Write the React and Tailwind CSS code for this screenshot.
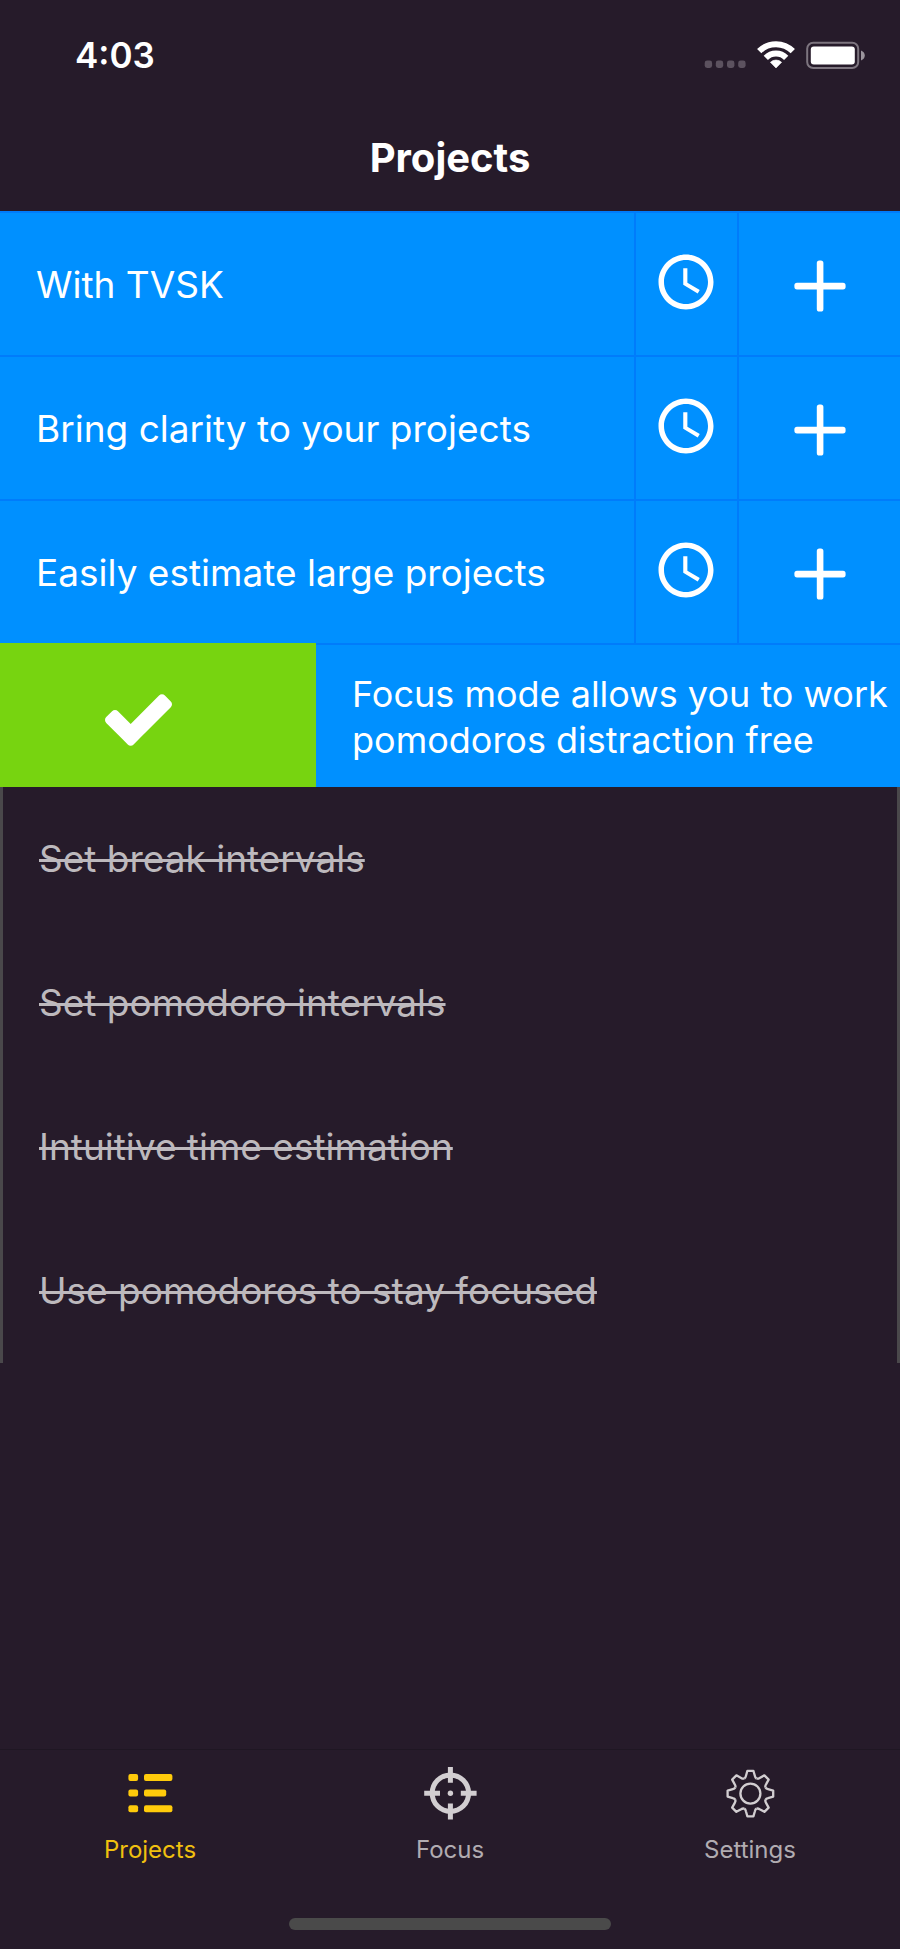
import React from "react";

const openProjects = [
  "With TVSK",
  "Bring clarity to your projects",
  "Easily estimate large projects",
];

const doneProjects = [
  "Set break intervals",
  "Set pomodoro intervals",
  "Intuitive time estimation",
  "Use pomodoros to stay focused",
];

function StatusIcons() {
  return (
    <svg width="162" height="30" viewBox="0 0 162 30" aria-hidden="true">
      <g fill="#5c525f">
        <rect x="0.7" y="20.6" width="7.4" height="7.4" rx="2.4" />
        <rect x="11.8" y="20.6" width="7.4" height="7.4" rx="2.4" />
        <rect x="23" y="20.6" width="7.4" height="7.4" rx="2.4" />
        <rect x="34.2" y="20.6" width="7.4" height="7.4" rx="2.4" />
      </g>
      <g fill="none" stroke="#fff" strokeWidth="6">
        <path d="M55.2 11.2 A23.6 23.6 0 0 1 88.8 11.2" />
        <path d="M61.8 17.8 A14.4 14.4 0 0 1 82.2 17.8" />
      </g>
      <path d="M72 28 L66.4 22.3 A8 8 0 0 1 77.6 22.3 Z" fill="#fff" stroke="#fff" strokeWidth="0.6" strokeLinejoin="round" />
      <rect x="103.2" y="2.8" width="51" height="25.2" rx="6" fill="none" stroke="#7d757f" strokeWidth="2" />
      <rect x="106.8" y="6.4" width="44" height="18" rx="3" fill="#fff" />
      <path d="M157 10.4 Q160.8 12 160.8 15.4 Q160.8 18.8 157 20.4 Z" fill="#9b959d" />
    </svg>
  );
}

function ClockIcon() {
  return (
    <svg width="66" height="66" viewBox="0 0 24 24" fill="#fff" aria-hidden="true">
      <path d="M11.99 2C6.47 2 2 6.48 2 12s4.47 10 9.99 10C17.52 22 22 17.52 22 12S17.52 2 11.99 2zM12 20c-4.42 0-8-3.58-8-8s3.58-8 8-8 8 3.58 8 8-3.58 8-8 8z" />
      <path d="M12.5 7H11v6l5.25 3.15.75-1.23-4.5-2.67z" />
    </svg>
  );
}

function PlusIcon() {
  return (
    <svg width="52" height="52" viewBox="0 0 52 52" fill="#fff" aria-hidden="true">
      <rect x="0.4" y="22.8" width="51.2" height="6.6" rx="2.6" />
      <rect x="22.8" y="0.4" width="6.6" height="51.2" rx="2.6" />
    </svg>
  );
}

function CheckIcon() {
  return (
    <svg width="67" height="52" viewBox="121 334 1550 1188" fill="#fff" aria-hidden="true">
      <path d="M1671 566q0 40-28 68l-724 724-136 136q-28 28-68 28t-68-28l-136-136-362-362q-28-28-28-68t28-68l136-136q28-28 68-28t68 28l294 295 656-657q28-28 68-28t68 28l136 136q28 28 28 68z" />
    </svg>
  );
}

function ListIcon() {
  return (
    <svg width="56" height="56" viewBox="0 0 56 56" fill="#ffcb0b" aria-hidden="true">
      <rect x="6.4" y="9" width="9.7" height="7" rx="2" />
      <rect x="22" y="9" width="28.4" height="7" rx="2" />
      <rect x="6.4" y="24.6" width="9.7" height="7" rx="2" />
      <rect x="22" y="24.6" width="22.2" height="7" rx="2" />
      <rect x="6.4" y="40.2" width="9.7" height="7" rx="2" />
      <rect x="22" y="40.2" width="28.4" height="7" rx="2" />
    </svg>
  );
}

function TargetIcon() {
  return (
    <svg width="56" height="56" viewBox="0 0 56 56" fill="none" stroke="#d2ced1" strokeWidth="5" aria-hidden="true">
      <circle cx="28.4" cy="28.2" r="18.2" />
      <path d="M28.4 2V17.8M28.4 38.6V54.4M2.2 28.2H18M38.8 28.2H54.6" />
      <circle cx="28.4" cy="28.2" r="2.7" fill="#d2ced1" stroke="none" />
    </svg>
  );
}

const toothAngles = [0, 45, 90, 135, 180, 225, 270, 315];

function GearIcon() {
  return (
    <svg width="56" height="56" viewBox="0 0 56 56" fill="none" stroke="#d2ced1" strokeWidth="2.3" strokeLinejoin="round" aria-hidden="true">
      <g transform="translate(28.4 28.6)">
        {toothAngles.map((angle) => (
          <path
            key={angle}
            transform={`rotate(${angle})`}
            d="M-6.2 -15 Q-4.9 -15.8 -4.5 -17.6 L-3 -22.8 H3 L4.5 -17.6 Q4.9 -15.8 6.2 -15"
          />
        ))}
        <circle r="10" />
      </g>
    </svg>
  );
}

const tabs = [
  { name: "Projects", Icon: ListIcon, color: "text-[#f0c00f]", current: true },
  { name: "Focus", Icon: TargetIcon, color: "text-[#b1acb1]", current: false },
  { name: "Settings", Icon: GearIcon, color: "text-[#b1acb1]", current: false },
];

export default function App() {
  return (
    <div className="flex min-h-screen flex-col bg-[#261b2a] font-['Inter',sans-serif] text-[37px] leading-[46px] text-white">
      <header>
        <div className="flex h-[110px] items-center justify-between pr-[34px] pl-[75px]">
          <time className="text-[35px] font-semibold">4:03</time>
          <StatusIcons />
        </div>
        <h1 className="flex h-[101px] justify-center pt-[25px] text-[40px] font-bold">Projects</h1>
      </header>

      <main className="flex-1">
        <ul>
          {openProjects.map((name) => (
            <li key={name} className="flex h-[144px] border-t-2 border-[#007cfb] bg-[#0090ff]">
              <span className="flex flex-1 items-center pt-0.5 pl-[36px]">{name}</span>
              <button
                type="button"
                aria-label={`Time estimate for ${name}`}
                className="flex w-[103px] items-center justify-center border-l-2 border-[#007cfb] pr-0.5 pb-1"
              >
                <ClockIcon />
              </button>
              <button
                type="button"
                aria-label={`Add pomodoro to ${name}`}
                className="flex w-[163px] items-center justify-center border-l-2 border-[#007cfb] pt-1"
              >
                <PlusIcon />
              </button>
            </li>
          ))}
          <li className="flex h-[144px] overflow-hidden">
            <button
              type="button"
              aria-label="Complete project"
              className="flex w-[316px] shrink-0 items-center bg-[#77d410] pt-2.5 pl-[105px]"
            >
              <CheckIcon />
            </button>
            <span className="flex flex-1 items-center border-t-2 border-[#007cfb] bg-[#0090ff] pt-0.5 pl-[36px] text-[36px] leading-[46px] whitespace-nowrap">
              <span>
                Focus mode allows you to work
                <br />
                pomodoros distraction free
              </span>
            </span>
          </li>
          {doneProjects.map((name) => (
            <li
              key={name}
              className="flex h-[144px] items-center border-x-3 border-[#4a484b] pl-[36px] text-[#bdb9bd]"
            >
              <s className="decoration-3">{name}</s>
            </li>
          ))}
        </ul>
      </main>

      <footer className="border-t border-[#1f1723]">
        <nav className="grid h-[168px] grid-cols-3">
          {tabs.map(({ name, Icon, color, current }) => (
            <a
              key={name}
              href={`#${name.toLowerCase()}`}
              aria-current={current ? "page" : undefined}
              className={`flex flex-col items-center pt-[15px] text-[24px] leading-[32px] ${color}`}
            >
              <Icon />
              <span className="mt-[13px]">{name}</span>
            </a>
          ))}
        </nav>
        <div className="flex justify-center pb-[19px]">
          <div className="h-[12px] w-[322px] rounded-full bg-[#4a4a4a]" />
        </div>
      </footer>
    </div>
  );
}
